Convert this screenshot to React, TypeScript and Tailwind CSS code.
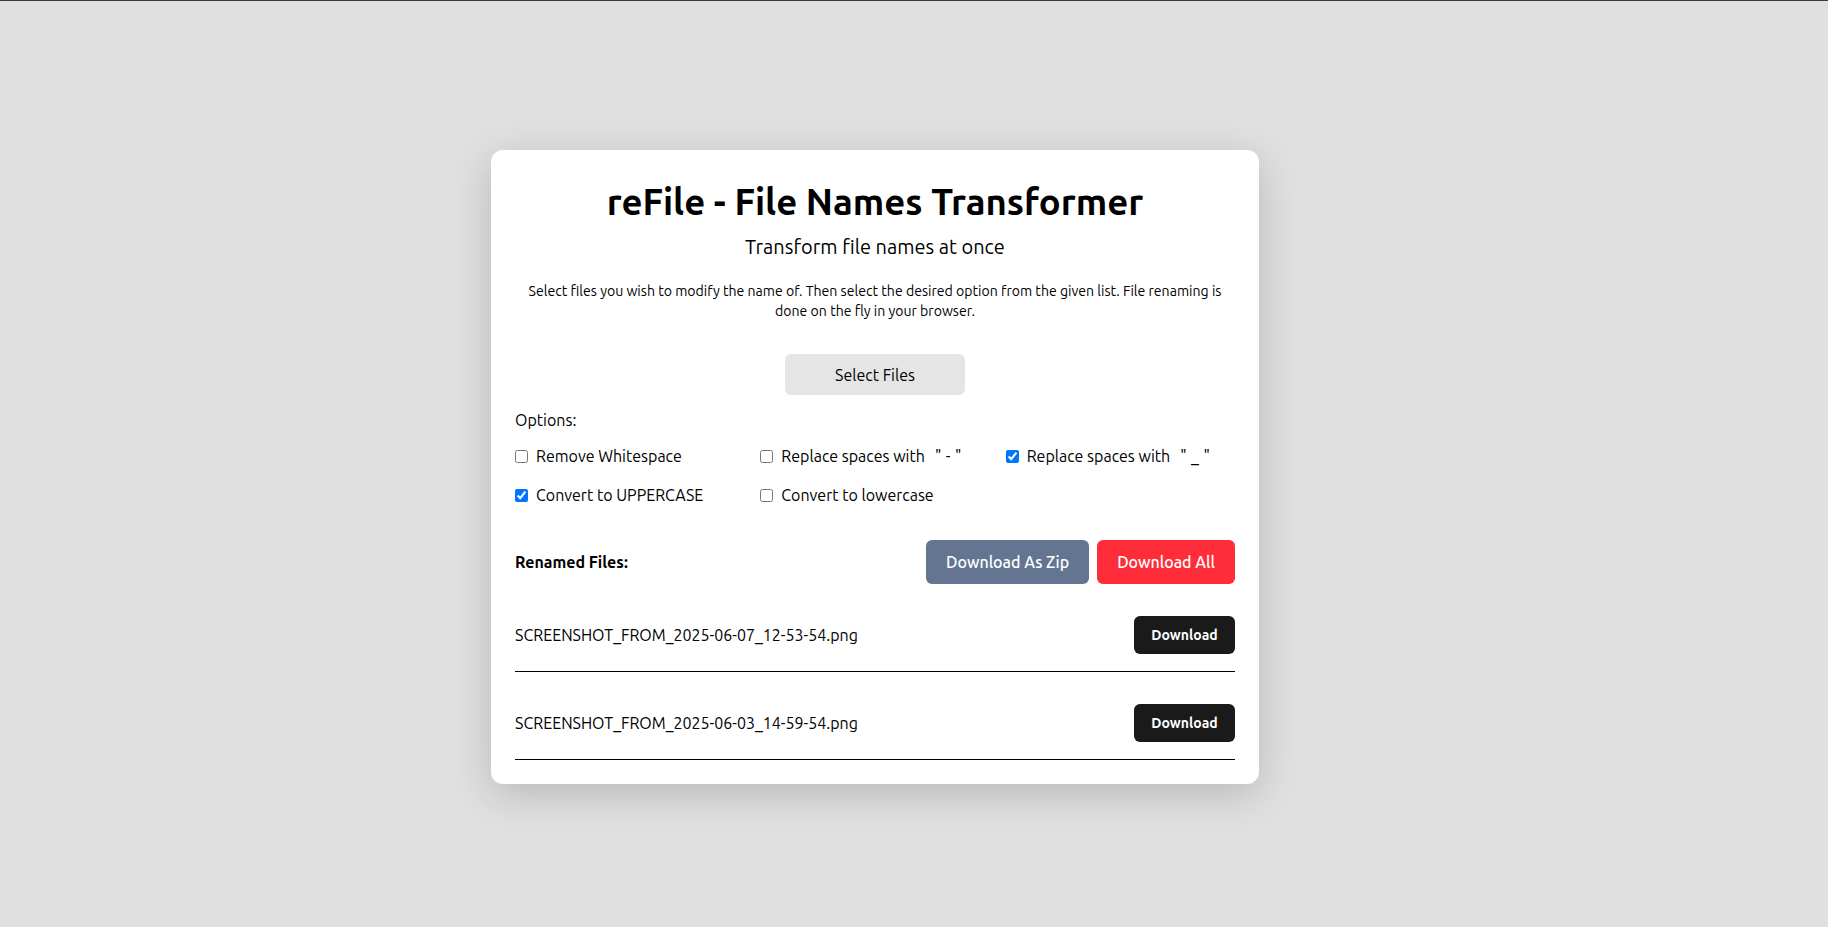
import { useState } from 'react';

const files = [
  'SCREENSHOT_FROM_2025-06-07_12-53-54.png',
  'SCREENSHOT_FROM_2025-06-03_14-59-54.png',
];

const options = [
  { id: 'ws', label: 'Remove Whitespace', on: false },
  { id: 'dash', label: 'Replace spaces with', quote: '"-"', on: false },
  { id: 'under', label: 'Replace spaces with', quote: '"_"', on: true },
  { id: 'upper', label: 'Convert to UPPERCASE', on: true },
  { id: 'lower', label: 'Convert to lowercase', on: false },
];

export default function App() {
  const [checked, setChecked] = useState<Record<string, boolean>>(
    Object.fromEntries(options.map((o) => [o.id, o.on]))
  );

  return (
    <div
      className="min-h-screen bg-[#e0e0e0] border-t border-[#3a3a3a] pt-[149px] pr-[78px] flex justify-center items-start text-black"
      style={{ fontFamily: 'Ubuntu, "Open Sans", sans-serif' }}
    >
      <div className="w-[768px] bg-white rounded-xl p-6 shadow-[0_10px_40px_rgba(0,0,0,0.18)]">
        <h1 className="text-center font-bold text-[36.5px] leading-[56px]">reFile - File Names Transformer</h1>
        <p className="text-center text-[20px] leading-7 mt-[3px]">Transform file names at once</p>
        <p className="text-center text-[14.1px] leading-5 mt-5">
          Select files you wish to modify the name of. Then select the desired option from the given list. File renaming is done on the fly in your browser.
        </p>

        <div className="flex justify-center mt-[33px]">
          <button className="w-[180px] h-[41px] rounded-md bg-[#e6e5e5] text-[16px]">Select Files</button>
        </div>

        <div className="mt-[13px] text-[16px] leading-6">Options:</div>
        <div className="grid grid-cols-3 gap-x-4 gap-y-[15px] mt-3">
          {options.map((o) => (
            <label key={o.id} className="flex items-center gap-2 text-[16px] leading-6">
              <input
                type="checkbox"
                className="w-[13px] h-[13px] m-0 accent-[#0075ff]"
                checked={checked[o.id]}
                onChange={() => setChecked({ ...checked, [o.id]: !checked[o.id] })}
              />
              <span>
                {o.label}
                {o.quote && <span className="ml-[10px] tracking-[4.5px]">{o.quote}</span>}
              </span>
            </label>
          ))}
        </div>

        <div className="flex items-center justify-between mt-[33px]">
          <span className="font-bold text-[16px]">Renamed Files:</span>
          <div className="flex gap-2">
            <button className="h-[44px] px-5 rounded-md bg-[#637590] text-white font-medium text-[16px]">Download As Zip</button>
            <button className="h-[44px] px-5 rounded-md bg-[#ff2d3a] text-white font-medium text-[16px]">Download All</button>
          </div>
        </div>

        {files.map((f) => (
          <div key={f} className="flex items-center justify-between mt-4 pt-4 pb-[17px] border-b border-black">
            <span className="text-[16px]">{f}</span>
            <button className="h-[38px] w-[101px] rounded-md bg-[#1a1a1a] text-white font-semibold text-[14px]">Download</button>
          </div>
        ))}
      </div>
    </div>
  );
}
